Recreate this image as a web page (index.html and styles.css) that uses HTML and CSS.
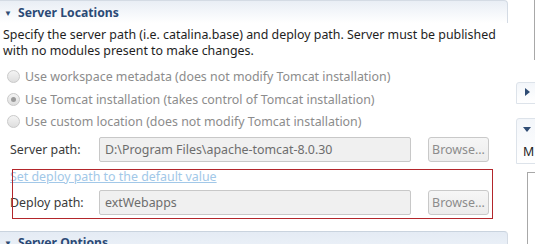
FILE: index.html
```html
<!DOCTYPE html>
<html>
<head>
    <link rel="stylesheet" href="styles.css">
</head>
<body>
    <div class="page">
        <div class="main">
            <div class="section-head">
                <span class="twisty">&#9660;</span>
                <span class="section-title">Server Locations</span>
            </div>
            <p class="desc">Specify the server path (i.e. catalina.base) and deploy path. Server must be published with no modules present to make changes.</p>

            <div class="radios">
                <label class="radio-row"><span class="radio"></span>Use workspace metadata (does not modify Tomcat installation)</label>
                <label class="radio-row"><span class="radio checked"></span>Use Tomcat installation (takes control of Tomcat installation)</label>
                <label class="radio-row"><span class="radio"></span>Use custom location (does not modify Tomcat installation)</label>
            </div>

            <div class="field-row">
                <span class="field-label">Server path:</span>
                <div class="field-input">D:\Program Files\apache-tomcat-8.0.30</div>
                <button class="browse">Browse...</button>
            </div>

            <a href="#" class="default-link">Set deploy path to the default value</a>

            <div class="field-row deploy">
                <span class="field-label">Deploy path:</span>
                <div class="field-input">extWebapps</div>
                <button class="browse">Browse...</button>
            </div>

            <div class="section-head next">
                <span class="twisty">&#9660;</span>
                <span class="section-title">Server Options</span>
            </div>

            <!-- annotation drawn over the form -->
            <div class="highlight"></div>
        </div>

        <div class="side">
            <div class="side-tab first"><span class="tri-right"></span></div>
            <div class="side-tab second"><span class="tri-down"></span><span class="side-letter">M</span></div>
            <div class="side-box"></div>
        </div>
    </div>
</body>
</html>
```

FILE: styles.css
```css
body {
    margin: 0;
    background-color: #FFFFFF;
    font-family: "Noto Sans", "Open Sans", sans-serif;
    font-size: 12.4px;
    color: #1e1e1e;
}

.page {
    display: flex;
    width: 535px;
    height: 244px;
    overflow: hidden;
}

.main {
    position: relative;
    width: 510px;
    flex-shrink: 0;
}

.section-head {
    display: flex;
    align-items: center;
    height: 22px;
    margin-right: 2px;
    border: 1px solid #d4dbe4;
    border-left: none;
    border-bottom: none;
    border-radius: 0 4px 0 0;
    background: linear-gradient(#e9eef5, #ffffff);
}

.twisty {
    font-size: 8px;
    color: #2f4c74;
    margin-left: 4px;
    margin-right: 6px;
}

.section-title {
    font-weight: bold;
    color: #2b4a76;
    font-size: 12.2px;
}

.desc {
    margin: 4px 0 0 3px;
    line-height: 16px;
}

.radios {
    display: flex;
    flex-direction: column;
    gap: 5px;
    margin-top: 9px;
    padding-left: 7px;
}

.radio-row {
    display: flex;
    align-items: center;
    height: 17.5px;
    color: #8c8c8c;
}

.radio {
    width: 11px;
    height: 11px;
    border: 1px solid #c9c9c9;
    border-radius: 50%;
    background: linear-gradient(#f4f4f4, #dedede);
    margin-right: 5px;
    position: relative;
}

.radio.checked::after {
    content: "";
    position: absolute;
    left: 3px;
    top: 3px;
    width: 5px;
    height: 5px;
    border-radius: 50%;
    background: #9a9a9a;
}

.field-row {
    display: flex;
    align-items: center;
    margin-top: 6px;
    padding-left: 10px;
}

.field-label {
    width: 89px;
    color: #3a3a3a;
}

.field-input {
    width: 305px;
    height: 23px;
    line-height: 23px;
    padding-left: 5px;
    border: 1px solid #c8c8c8;
    border-radius: 2px;
    background-color: #f0f0f0;
    color: #6d6d6d;
}

.browse {
    margin-left: 17px;
    width: 61px;
    height: 25px;
    padding: 0;
    border: 1px solid #c9c9c9;
    border-radius: 3px;
    background: linear-gradient(#f6f6f6, #ececec);
    color: #8c8c8c;
    font-family: inherit;
    font-size: 12.4px;
}

.default-link {
    display: block;
    margin: 6px 0 0 10px;
    color: #a2c8e8;
    text-decoration: underline;
    line-height: 18px;
}

.field-row.deploy {
    margin-top: 4px;
}

.section-head.next {
    margin-top: 16px;
    border-top-color: #c9d3de;
    background: linear-gradient(#e4ebf4, #eef3f9);
}

.highlight {
    position: absolute;
    left: 12px;
    top: 169px;
    width: 479px;
    height: 48px;
    border: 1px solid #b3262b;
}

.side {
    flex: 1;
    position: relative;
    border-right: 1px solid #a8a8a8;
    height: 60px;
}

.side-tab {
    position: absolute;
    left: 6px;
    width: 24px;
    height: 20px;
    border: 1px solid #dde3ea;
    border-radius: 3px 0 0 0;
    background: linear-gradient(#f3f6fa, #ffffff);
}

.side-tab.first {
    top: 82px;
}

.side-tab.second {
    top: 118px;
    height: 44px;
}

.tri-right {
    position: absolute;
    left: 8px;
    top: 5px;
    border-left: 5px solid #2f4c74;
    border-top: 4px solid transparent;
    border-bottom: 4px solid transparent;
}

.tri-down {
    position: absolute;
    left: 6px;
    top: 8px;
    border-top: 5px solid #2f4c74;
    border-left: 4px solid transparent;
    border-right: 4px solid transparent;
}

.side-letter {
    position: absolute;
    left: 6px;
    top: 24px;
    color: #222;
}

.side-box {
    position: absolute;
    left: 17px;
    top: 172px;
    width: 20px;
    height: 80px;
    border-left: 1px solid #a8a8a8;
    border-top: 1px solid #a8a8a8;
}
```
